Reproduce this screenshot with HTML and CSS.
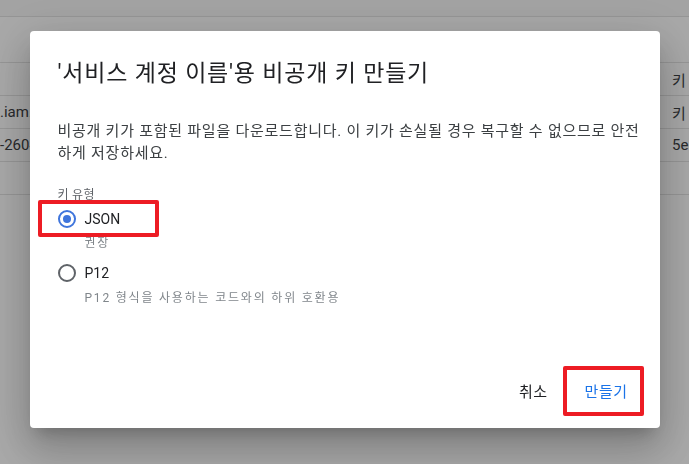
FILE: index.html
```html
<!DOCTYPE html>
<html lang="ko">
<head>
    <meta charset="UTF-8">
    <meta name="viewport" content="width=device-width, initial-scale=1.0">
    <title>서비스 계정 키</title>
    <link rel="stylesheet" href="styles.css">
</head>
<body>
    <div class="page">
        <div class="topbar"></div>
        <div class="toolbar"></div>
        <div class="keys">
            <div class="key-row head">
                <span class="cell"></span>
                <span class="cell">키 ID</span>
            </div>
            <div class="key-row">
                <span class="cell">.iam.gserviceaccount.com</span>
                <span class="cell">키 없음</span>
            </div>
            <div class="key-row">
                <span class="cell">-260418</span>
                <span class="cell">5e1f</span>
            </div>
            <div class="key-row">
                <span class="cell"></span>
                <span class="cell"></span>
            </div>
        </div>
    </div>

    <div class="scrim">
        <div class="dialog" role="dialog">
            <h2 class="dialog-title">'서비스 계정 이름'용 비공개 키 만들기</h2>
            <p class="dialog-text">비공개 키가 포함된 파일을 다운로드합니다. 이 키가 손실될 경우 복구할 수 없으므로 안전하게 저장하세요.</p>

            <div class="field-label">키 유형</div>
            <div class="option">
                <label class="option-row marked">
                    <input type="radio" name="key_type" value="json" checked>
                    <span class="radio"></span>
                    <span class="option-name">JSON</span>
                </label>
                <div class="option-hint">권장</div>
            </div>
            <div class="option">
                <label class="option-row">
                    <input type="radio" name="key_type" value="p12">
                    <span class="radio"></span>
                    <span class="option-name">P12</span>
                </label>
                <div class="option-hint">P12 형식을 사용하는 코드와의 하위 호환용</div>
            </div>

            <div class="dialog-actions">
                <button class="btn">취소</button>
                <button class="btn primary marked">만들기</button>
            </div>
        </div>
    </div>
</body>
</html>
```

FILE: styles.css
```css
* { box-sizing: border-box; }
body { margin: 0; font-family: "Roboto", "Noto Sans CJK KR", sans-serif; color: #202124; background: #fff; overflow: hidden; }

/* page behind the dialog */
.page { height: 464px; }
.topbar { height: 17px; background: #f7f7f7; border-bottom: 1px solid #e3e3e3; }
.toolbar { height: 46px; border-bottom: 1px solid #e3e3e3; }
.key-row { display: grid; grid-template-columns: 672px 17px; height: 33px; align-items: center; border-bottom: 1px solid #e3e3e3; font-size: 15px; color: #3c4043; white-space: nowrap; }
.key-row .cell { overflow: hidden; }

/* dialog */
.scrim { position: fixed; inset: 0; background: rgba(0, 0, 0, 0.34); display: flex; justify-content: center; align-items: flex-start; padding-top: 31px; }
.dialog { width: 630px; height: 397px; background: #fff; border-radius: 4px; padding: 27px 17px 20px 28px; display: flex; flex-direction: column; box-shadow: 0 11px 15px -7px rgba(0,0,0,.2), 0 24px 38px 3px rgba(0,0,0,.14), 0 9px 46px 8px rgba(0,0,0,.12); }
.dialog-title { margin: 0; font-size: 23px; font-weight: 400; line-height: 32px; letter-spacing: 0.8px; color: #202124; }
.dialog-text { margin: 30px 0 0 0; font-size: 15px; line-height: 22px; letter-spacing: 0.75px; color: #3c4043; }

.field-label { margin-top: 23px; font-size: 12px; line-height: 16px; letter-spacing: 0.3px; color: #5f6368; }
.option { margin-top: 4px; }
.option + .option { margin-top: 10px; }
.option-row { position: relative; display: inline-flex; align-items: center; gap: 9px; height: 24px; cursor: pointer; }
.option-row input { display: none; }
.radio { width: 18px; height: 18px; border: 2px solid #5f6368; border-radius: 50%; display: flex; align-items: center; justify-content: center; }
.option-row input:checked + .radio { border-color: #3f75dc; }
.option-row input:checked + .radio::after { content: ""; width: 8px; height: 8px; border-radius: 50%; background: #3f75dc; }
.option-name { font-size: 14px; color: #202124; }
.option-hint { margin: 4px 0 0 27px; font-size: 12px; line-height: 16px; letter-spacing: 1.8px; color: #80868b; }

.dialog-actions { margin-top: auto; display: flex; justify-content: flex-end; gap: 7px; }
.btn { position: relative; height: 36px; padding: 0 15px; border: none; background: none; font-family: inherit; font-size: 15px; letter-spacing: 0.5px; color: #202124; cursor: pointer; }
.btn.primary { color: #1a73e8; }

/* red annotation boxes */
.marked::after { content: ""; position: absolute; border: 4px solid #ed1c24; border-radius: 2px; pointer-events: none; }
.option-row.marked::after { top: -7px; bottom: -6px; left: -20px; right: -39px; }
.btn.marked::after { top: -6px; bottom: -8px; left: -7px; right: -1px; }
```
